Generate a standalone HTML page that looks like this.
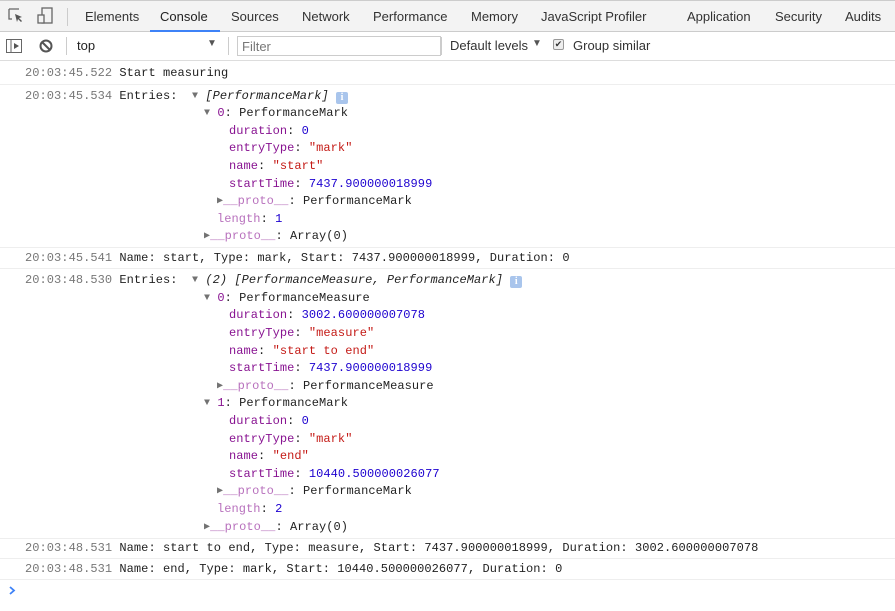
<!DOCTYPE html>
<html><head><meta charset="utf-8"><style>
*{margin:0;padding:0;box-sizing:border-box}
body{width:895px;height:611px;background:#fff;position:relative;overflow:hidden;font-family:"Liberation Sans",sans-serif;}
.tabs{position:absolute;left:0;top:0;width:895px;height:32px;background:#f3f3f3;border-bottom:1px solid #ccc;border-top:1px solid #ccc}
.tab{position:absolute;top:8px;font-size:13px;color:#333}
.tb{position:absolute;left:0;top:32px;width:895px;height:29px;border-bottom:1px solid #ddd;background:#fff}
.l{position:absolute;height:18px;line-height:18px;font-family:"Liberation Mono",monospace;font-size:12px;letter-spacing:0.06px;color:#222;white-space:pre}
.ts{color:#777}
.k{color:#881391}.kd{color:#b871bd}.s{color:#c41a16}.n{color:#1c00cf}
.t{color:#727272;font-size:10px;vertical-align:1px}
.sep{position:absolute;left:0;width:895px;height:1px;background:#eee}
i{font-style:italic}
.info{display:inline-block;width:12px;height:12px;background:#a9c5ec;color:#fff;font-size:10px;line-height:12px;text-align:center;border-radius:2px;font-family:"Liberation Serif",serif;font-weight:bold;vertical-align:-1px;font-style:normal}
</style></head><body>
<div class="tabs">
<svg style="position:absolute;left:8px;top:7px" width="16" height="16" viewBox="0 0 16 16"><path d="M1 1h10M1 1v10h3" fill="none" stroke="#666" stroke-width="1.3"/><path d="M7 6l7 3-3 1 3 3-1 1-3-3-1 3z" fill="#555"/></svg>
<svg style="position:absolute;left:36px;top:6px" width="18" height="18" viewBox="0 0 18 18"><rect x="6" y="1" width="10" height="15" fill="none" stroke="#666" stroke-width="1.3"/><rect x="2" y="8" width="6" height="8" fill="#f3f3f3" stroke="#666" stroke-width="1.3"/></svg>
<div style="position:absolute;left:67px;top:7px;width:1px;height:18px;background:#ccc"></div>
<span class="tab" style="left:85px">Elements</span>
<span class="tab" style="left:160px;color:#222">Console</span>
<div style="position:absolute;left:150px;top:29px;width:70px;height:2px;background:#3e82f7"></div>
<span class="tab" style="left:231px">Sources</span>
<span class="tab" style="left:302px">Network</span>
<span class="tab" style="left:373px">Performance</span>
<span class="tab" style="left:471px">Memory</span>
<span class="tab" style="left:541px">JavaScript Profiler</span>
<span class="tab" style="left:687px">Application</span>
<span class="tab" style="left:775px">Security</span>
<span class="tab" style="left:845px">Audits</span>
</div>
<div class="tb">
<svg style="position:absolute;left:6px;top:7px" width="16" height="14" viewBox="0 0 16 14"><rect x="0.5" y="0.5" width="15" height="13" fill="none" stroke="#666"/><path d="M5 1v12" stroke="#666"/><path d="M8 4l5 3-5 3z" fill="#555"/></svg>
<svg style="position:absolute;left:39px;top:7px" width="14" height="14" viewBox="0 0 14 14"><circle cx="7" cy="7" r="5.5" fill="none" stroke="#555" stroke-width="2"/><path d="M3 3l8 8" stroke="#555" stroke-width="2"/></svg>
<div style="position:absolute;left:66px;top:5px;width:1px;height:18px;background:#ccc"></div>
<span style="position:absolute;left:77px;top:6px;font-size:13px;color:#222">top</span>
<span style="position:absolute;left:207px;top:6px;font-size:10px;color:#555">▼</span>
<div style="position:absolute;left:228px;top:5px;width:1px;height:18px;background:#ccc"></div>
<div style="position:absolute;left:237px;top:4px;width:204px;height:20px;border:1px solid #ccc"></div>
<span style="position:absolute;left:242px;top:7px;font-size:13px;color:#777">Filter</span>
<div style="position:absolute;left:441px;top:5px;width:1px;height:18px;background:#ccc"></div>
<span style="position:absolute;left:450px;top:6px;font-size:13px;color:#333">Default levels</span>
<span style="position:absolute;left:532px;top:6px;font-size:10px;color:#555">▼</span>
<div style="position:absolute;left:553px;top:7px;width:11px;height:11px;border:1px solid #999;border-radius:2px;background:#eee;font-size:9px;line-height:9px;text-align:center;color:#333">✔</div>
<span style="position:absolute;left:573px;top:6px;font-size:13px;color:#333">Group similar</span>
</div>

<div class="l" style="top:64px;left:25px"><span class="ts">20:03:45.522</span> Start measuring</div>
<div class="sep" style="top:84px"></div>
<div class="l" style="top:87px;left:25px"><span class="ts">20:03:45.534</span> Entries:  <span class="t">▼</span> <i>[PerformanceMark]</i> <span class="info">i</span></div>
<div class="l" style="top:104px;left:204px"><span class="t">▼</span> <span class="k">0</span>: PerformanceMark</div>
<div class="l" style="top:122px;left:229px"><span class="k">duration</span>: <span class="n">0</span></div>
<div class="l" style="top:139px;left:229px"><span class="k">entryType</span>: <span class="s">"mark"</span></div>
<div class="l" style="top:157px;left:229px"><span class="k">name</span>: <span class="s">"start"</span></div>
<div class="l" style="top:175px;left:229px"><span class="k">startTime</span>: <span class="n">7437.900000018999</span></div>
<div class="l" style="top:192px;left:217px"><span class="t">▶</span><span class="kd">__proto__</span>: PerformanceMark</div>
<div class="l" style="top:210px;left:217px"><span class="kd">length</span>: <span class="n">1</span></div>
<div class="l" style="top:227px;left:204px"><span class="t">▶</span><span class="kd">__proto__</span>: Array(0)</div>
<div class="sep" style="top:247px"></div>
<div class="l" style="top:249px;left:25px"><span class="ts">20:03:45.541</span> Name: start, Type: mark, Start: 7437.900000018999, Duration: 0</div>
<div class="sep" style="top:268px"></div>
<div class="l" style="top:271px;left:25px"><span class="ts">20:03:48.530</span> Entries:  <span class="t">▼</span> <i>(2) [PerformanceMeasure, PerformanceMark]</i> <span class="info">i</span></div>
<div class="l" style="top:289px;left:204px"><span class="t">▼</span> <span class="k">0</span>: PerformanceMeasure</div>
<div class="l" style="top:306px;left:229px"><span class="k">duration</span>: <span class="n">3002.600000007078</span></div>
<div class="l" style="top:324px;left:229px"><span class="k">entryType</span>: <span class="s">"measure"</span></div>
<div class="l" style="top:342px;left:229px"><span class="k">name</span>: <span class="s">"start to end"</span></div>
<div class="l" style="top:359px;left:229px"><span class="k">startTime</span>: <span class="n">7437.900000018999</span></div>
<div class="l" style="top:377px;left:217px"><span class="t">▶</span><span class="kd">__proto__</span>: PerformanceMeasure</div>
<div class="l" style="top:394px;left:204px"><span class="t">▼</span> <span class="k">1</span>: PerformanceMark</div>
<div class="l" style="top:412px;left:229px"><span class="k">duration</span>: <span class="n">0</span></div>
<div class="l" style="top:430px;left:229px"><span class="k">entryType</span>: <span class="s">"mark"</span></div>
<div class="l" style="top:447px;left:229px"><span class="k">name</span>: <span class="s">"end"</span></div>
<div class="l" style="top:465px;left:229px"><span class="k">startTime</span>: <span class="n">10440.500000026077</span></div>
<div class="l" style="top:482px;left:217px"><span class="t">▶</span><span class="kd">__proto__</span>: PerformanceMark</div>
<div class="l" style="top:500px;left:217px"><span class="kd">length</span>: <span class="n">2</span></div>
<div class="l" style="top:518px;left:204px"><span class="t">▶</span><span class="kd">__proto__</span>: Array(0)</div>
<div class="sep" style="top:538px"></div>
<div class="l" style="top:539px;left:25px"><span class="ts">20:03:48.531</span> Name: start to end, Type: measure, Start: 7437.900000018999, Duration: 3002.600000007078</div>
<div class="sep" style="top:558px"></div>
<div class="l" style="top:560px;left:25px"><span class="ts">20:03:48.531</span> Name: end, Type: mark, Start: 10440.500000026077, Duration: 0</div>
<div class="sep" style="top:579px"></div>
<svg style="position:absolute;left:8px;top:586px" width="8" height="9" viewBox="0 0 8 9"><path d="M2 1l4 3.5-4 3.5" fill="none" stroke="#3e82f7" stroke-width="1.8"/></svg>
</body></html>
